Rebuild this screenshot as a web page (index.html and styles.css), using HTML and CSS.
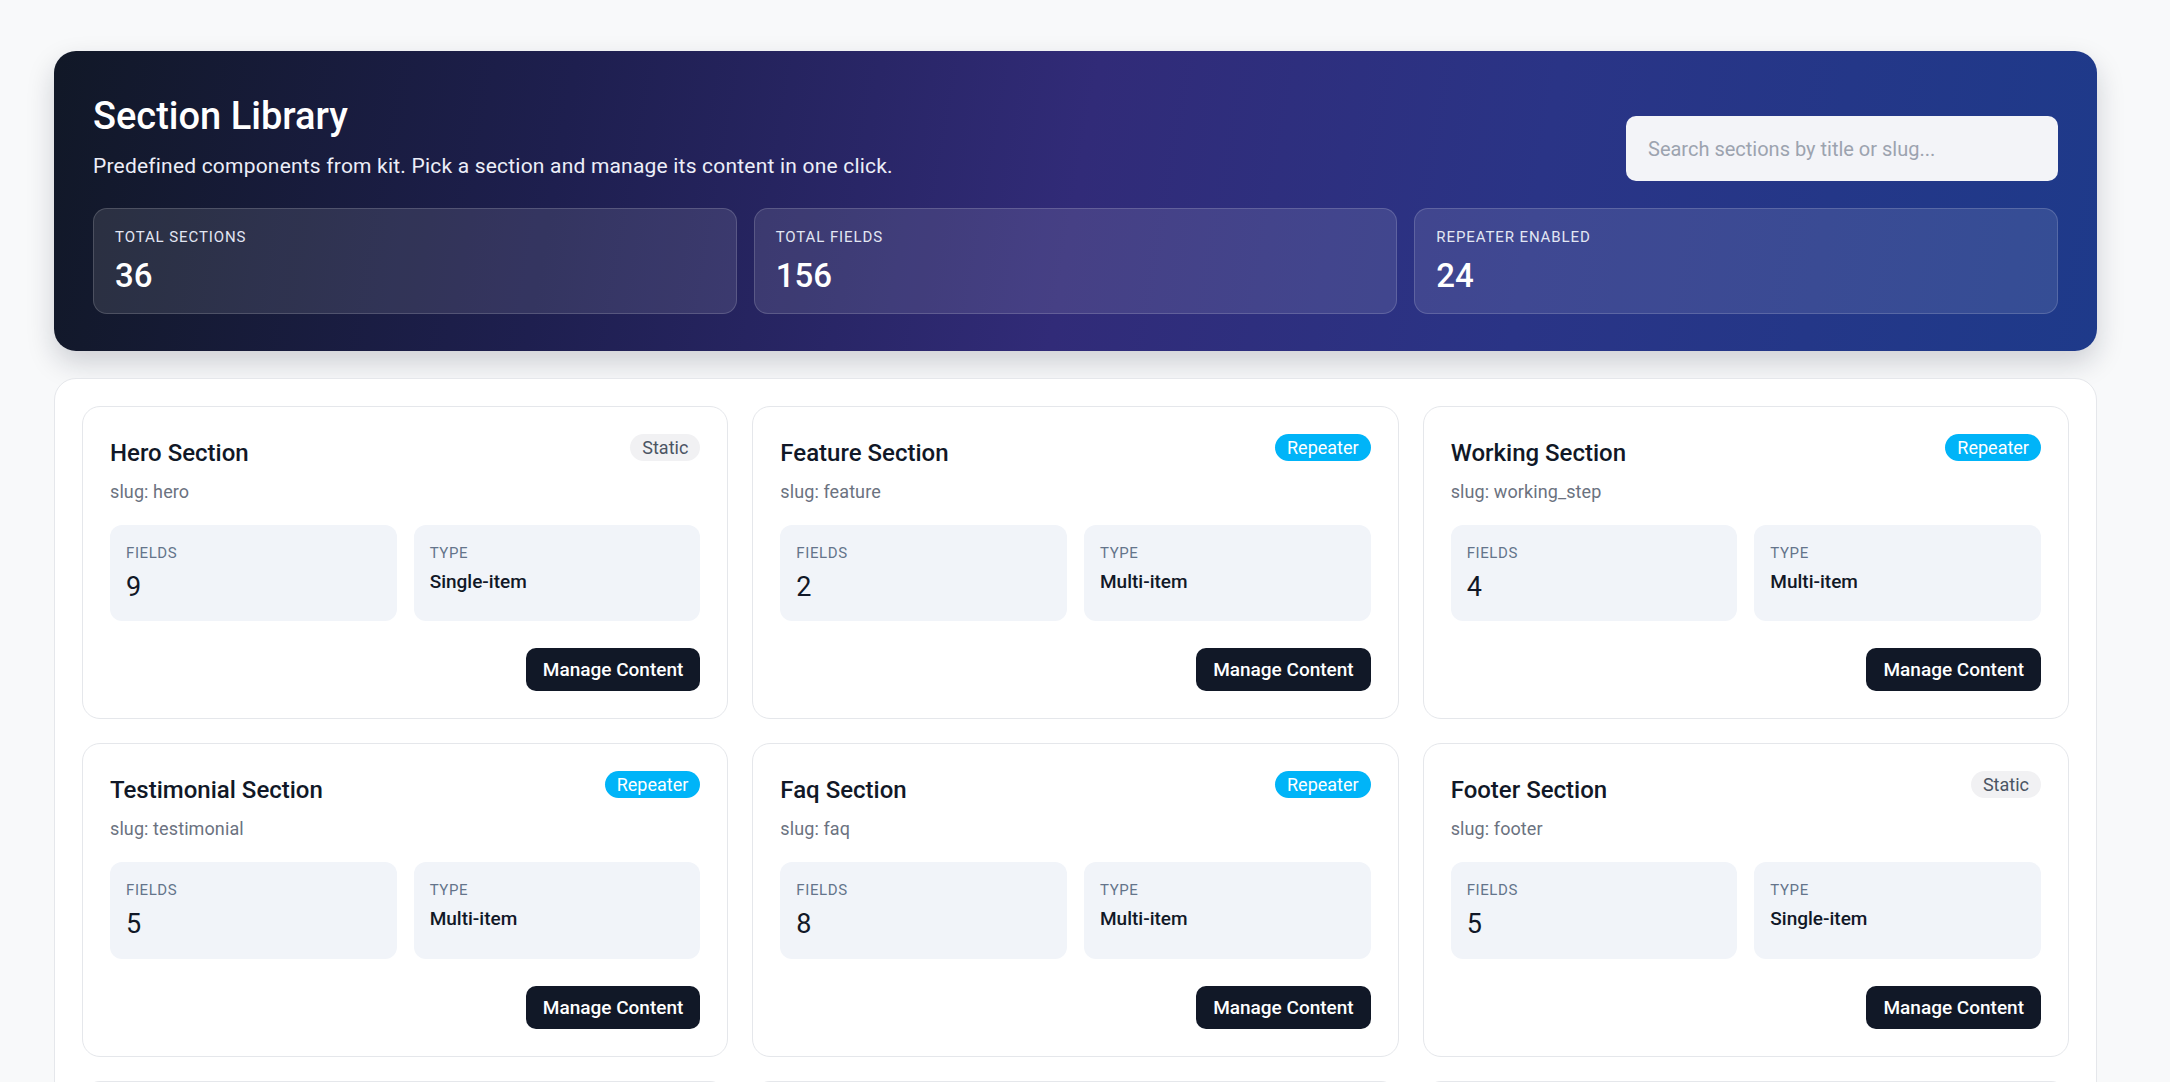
FILE: index.html
```html
<!DOCTYPE html>
<html lang="en">
<head>
    <meta charset="UTF-8">
    <meta name="viewport" content="width=device-width, initial-scale=1.0">
    <title>Section Library</title>
    <link rel="stylesheet" href="styles.css">
</head>
<body>
    <div class="page">
        <header class="hero">
            <div class="hero-top">
                <div class="hero-text">
                    <h1>Section Library</h1>
                    <p>Predefined components from kit. Pick a section and manage its content in one click.</p>
                </div>
                <input type="text" class="search" id="search" placeholder="Search sections by title or slug...">
            </div>
            <div class="stats">
                <div class="stat">
                    <div class="stat-label">Total Sections</div>
                    <div class="stat-value">36</div>
                </div>
                <div class="stat">
                    <div class="stat-label">Total Fields</div>
                    <div class="stat-value">156</div>
                </div>
                <div class="stat">
                    <div class="stat-label">Repeater Enabled</div>
                    <div class="stat-value">24</div>
                </div>
            </div>
        </header>

        <main class="library">
            <div class="grid" id="grid"></div>
        </main>
    </div>

    <script>
        // section list (same shape as what the api returns)
        const sections = [
            { title: "Hero Section", slug: "hero", fields: 9, repeater: false },
            { title: "Feature Section", slug: "feature", fields: 2, repeater: true },
            { title: "Working Section", slug: "working_step", fields: 4, repeater: true },
            { title: "Testimonial Section", slug: "testimonial", fields: 5, repeater: true },
            { title: "Faq Section", slug: "faq", fields: 8, repeater: true },
            { title: "Footer Section", slug: "footer", fields: 5, repeater: false },
            { title: "About Section", slug: "about", fields: 7, repeater: false },
            { title: "Pricing Section", slug: "pricing", fields: 6, repeater: true },
            { title: "Team Section", slug: "team", fields: 4, repeater: true },
            { title: "Blog Section", slug: "blog", fields: 3, repeater: true },
            { title: "Contact Section", slug: "contact", fields: 6, repeater: false },
            { title: "Cta Section", slug: "cta", fields: 4, repeater: false },
            { title: "Counter Section", slug: "counter", fields: 3, repeater: true },
            { title: "Brand Section", slug: "brand", fields: 2, repeater: true },
            { title: "Service Section", slug: "service", fields: 5, repeater: true },
            { title: "Portfolio Section", slug: "portfolio", fields: 6, repeater: true },
            { title: "Gallery Section", slug: "gallery", fields: 2, repeater: true },
            { title: "Newsletter Section", slug: "newsletter", fields: 4, repeater: false }
        ];

        function renderSections(list) {
            const grid = document.getElementById("grid");
            grid.innerHTML = list.map(s => `
                <div class="card">
                    <div class="card-head">
                        <h3 class="card-title">${s.title}</h3>
                        <span class="badge ${s.repeater ? "badge-repeater" : "badge-static"}">${s.repeater ? "Repeater" : "Static"}</span>
                    </div>
                    <div class="slug">slug: ${s.slug}</div>
                    <div class="meta">
                        <div class="meta-box">
                            <div class="meta-label">Fields</div>
                            <div class="meta-value">${s.fields}</div>
                        </div>
                        <div class="meta-box">
                            <div class="meta-label">Type</div>
                            <div class="meta-text">${s.repeater ? "Multi-item" : "Single-item"}</div>
                        </div>
                    </div>
                    <div class="card-foot">
                        <button class="btn">Manage Content</button>
                    </div>
                </div>
            `).join("");
        }

        // filter by title or slug
        document.getElementById("search").addEventListener("input", function() {
            const q = this.value.trim().toLowerCase();
            renderSections(sections.filter(s =>
                s.title.toLowerCase().includes(q) || s.slug.toLowerCase().includes(q)
            ));
        });

        renderSections(sections);
    </script>
</body>
</html>
```

FILE: styles.css
```css
body {
    font-family: Roboto, "Liberation Sans", Arial, sans-serif;
    background: #f8f9fa;
    color: #111827;
    margin: 0;
    padding: 0;
}
.page {
    max-width: 2043px;
    padding: 51px 0 60px 54px;
}
.hero {
    padding: 40px 39px 37px;
    border-radius: 22px;
    color: #fff;
    background: linear-gradient(100deg, #111827 0%, #1e1f4f 25%, #312b78 50%, #2a3486 72%, #1e3a8a 100%);
    box-shadow: 0 12px 28px rgba(15, 23, 42, 0.18);
}
.hero-top {
    display: flex;
    justify-content: space-between;
    align-items: flex-end;
}
.hero h1 {
    margin: 0;
    font-size: 38px;
    font-weight: 500;
    line-height: 1.35;
}
.hero p {
    margin: 9px 0 0;
    font-size: 21px;
    letter-spacing: 0.2px;
    line-height: 30px;
    color: #eceef8;
}
.search {
    width: 432px;
    height: 65px;
    box-sizing: border-box;
    padding: 0 22px;
    border: none;
    border-radius: 10px;
    background: #f3f4f8;
    font-family: inherit;
    font-size: 20px;
    color: #111827;
    outline: none;
}
.search::placeholder {
    color: #9ca3af;
}
.stats {
    display: grid;
    grid-template-columns: repeat(3, 1fr);
    gap: 17px;
    margin-top: 27px;
}
.stat {
    padding: 18px 21px 17px;
    border: 1px solid rgba(255, 255, 255, 0.16);
    border-radius: 14px;
    background: rgba(255, 255, 255, 0.1);
}
.stat-label {
    font-size: 15px;
    line-height: 21px;
    text-transform: uppercase;
    letter-spacing: 0.06em;
    color: #e2e6f3;
}
.stat-value {
    margin-top: 8px;
    font-size: 33px;
    font-weight: 500;
    line-height: 1.2;
}
.library {
    margin-top: 27px;
    padding: 27px;
    background: #fff;
    border: 1px solid #e5e7eb;
    border-radius: 22px;
}
.grid {
    display: grid;
    grid-template-columns: repeat(3, 1fr);
    gap: 24px;
}
.card {
    padding: 27px;
    border: 1px solid #e5e7eb;
    border-radius: 18px;
    background: #fff;
}
.card-head {
    display: flex;
    justify-content: space-between;
    align-items: flex-start;
}
.card-title {
    margin: 4px 0 0;
    font-size: 24px;
    font-weight: 500;
    line-height: 31px;
    color: #111827;
}
.badge {
    padding: 0 12px;
    border-radius: 999px;
    font-size: 18px;
    line-height: 27px;
}
.badge-static {
    background: #f1f1f3;
    color: #4b5563;
}
.badge-repeater {
    background: #00b4f8;
    color: #fff;
}
.slug {
    margin-top: 9px;
    font-size: 18px;
    letter-spacing: 0.1px;
    line-height: 27px;
    color: #6b7280;
}
.meta {
    display: grid;
    grid-template-columns: 1fr 1fr;
    gap: 17px;
    margin-top: 20px;
}
.meta-box {
    padding: 17px 16px 18px;
    border-radius: 12px;
    background: #f1f4f9;
}
.meta-label {
    font-size: 15px;
    line-height: 22px;
    text-transform: uppercase;
    letter-spacing: 0.04em;
    color: #64748b;
}
.meta-value {
    margin-top: 7px;
    font-size: 27px;
    line-height: 1.2;
    color: #111827;
}
.meta-text {
    margin-top: 5px;
    font-size: 19px;
    font-weight: 500;
    line-height: 1.4;
    color: #111827;
}
.card-foot {
    display: flex;
    justify-content: flex-end;
    margin-top: 27px;
}
.btn {
    padding: 8px 17px;
    border: none;
    border-radius: 10px;
    background: #111827;
    color: #fff;
    font-family: inherit;
    font-size: 19px;
    font-weight: 500;
    line-height: 27px;
    cursor: pointer;
}
.btn:hover {
    background: #1f2937;
}
```
